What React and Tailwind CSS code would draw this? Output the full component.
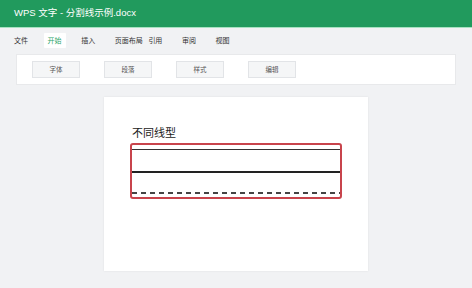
const menus = ['文件', '开始', '插入', '页面布局', '引用', '审阅', '视图'];
const tools = ['字体', '段落', '样式', '编辑'];

export default function App() {
  return (
    <div className="w-[472px] h-[288px] overflow-hidden bg-[#f1f2f4] font-['Noto_Sans_CJK_SC',sans-serif]">
      {/* Title bar */}
      <div className="h-[27px] bg-[#219a5d] flex items-center pl-[14px] border-b border-[#a7e2c1] box-content">
        <span className="text-[9.5px] text-white font-['Liberation_Sans','Noto_Sans_CJK_SC',sans-serif]">
          WPS 文字 - 分割线示例.docx
        </span>
      </div>

      {/* Menu tabs */}
      <div className="flex pl-[10px] pt-[5px] h-[20px]">
        {menus.map((m, i) => (
          <div key={m} className="w-[33.6px] shrink-0 flex items-center">
            <span
              className={`px-[4px] py-[3px] text-[7px] leading-[9px] whitespace-nowrap rounded-[1px] ${
                i === 1 ? 'bg-white text-[#2ba56a]' : 'text-[#333]'
              }`}
            >
              {m}
            </span>
          </div>
        ))}
      </div>

      {/* Toolbar */}
      <div className="mx-[16px] mt-[6px] h-[31px] bg-white border border-[#e8e9eb] flex items-center pl-[15px] gap-[24px]">
        {tools.map(t => (
          <div
            key={t}
            className="w-[48px] h-[17px] bg-[#f5f6f7] border border-[#e2e4e7] flex items-center justify-center text-[6.5px] text-[#555]"
          >
            {t}
          </div>
        ))}
      </div>

      {/* Document page */}
      <div className="ml-[104px] mt-[12px] w-[264px] h-[174px] bg-white shadow-[0_0_2px_rgba(0,0,0,0.08)] px-[26px] pt-[27px]">
        <div className="pl-[2px] text-[11px] leading-[16px] text-[#222]">不同线型</div>
        <div className="mt-[3px] h-[56px] border-2 border-[#c8444c] rounded-[3px] flex flex-col">
          <div className="mt-[4px] h-px shrink-0 bg-[#333]" />
          <div className="mt-[21px] h-[2px] shrink-0 bg-[#222]" />
          <svg className="mt-[19px] block shrink-0" width="100%" height="2">
            <line x1="0" y1="1" x2="100%" y2="1" stroke="#444" strokeWidth="2" strokeDasharray="5 4" />
          </svg>
        </div>
      </div>
    </div>
  );
}
